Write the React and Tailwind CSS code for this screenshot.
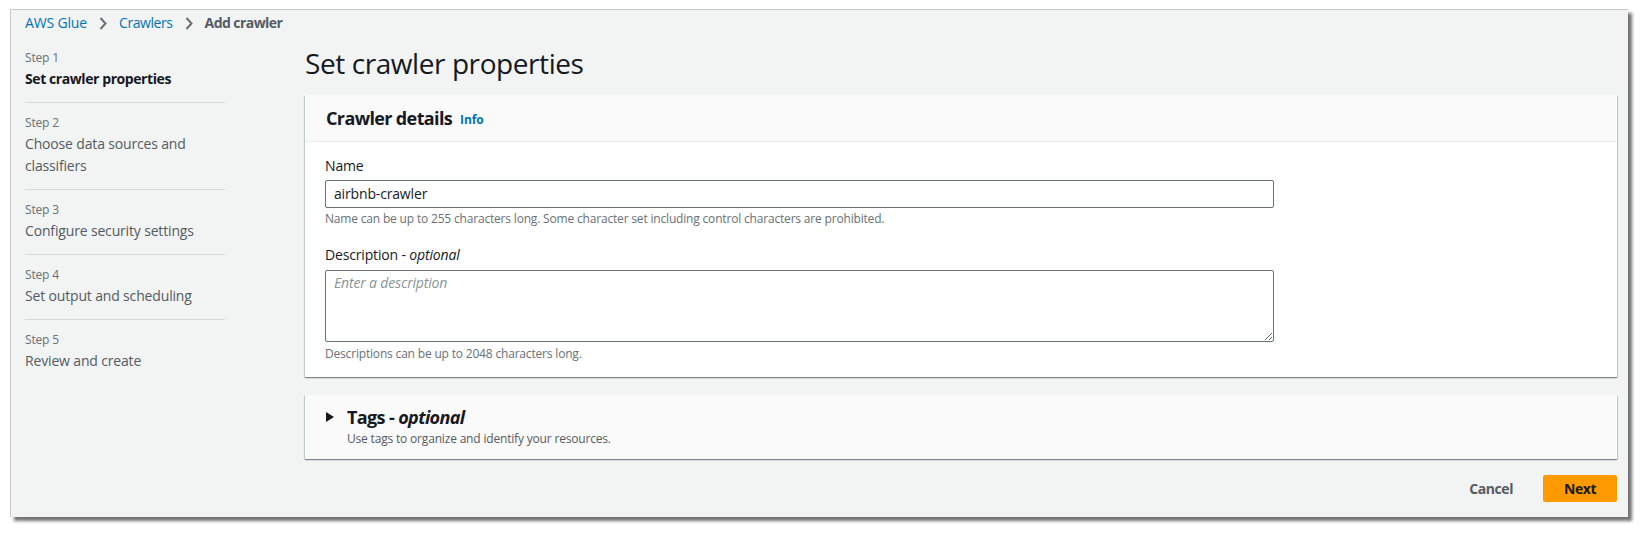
import React from 'react';

const steps = [
  { label: 'Step 1', title: 'Set crawler properties', active: true },
  { label: 'Step 2', title: 'Choose data sources and classifiers' },
  { label: 'Step 3', title: 'Configure security settings' },
  { label: 'Step 4', title: 'Set output and scheduling' },
  { label: 'Step 5', title: 'Review and create' },
];

const Chevron = () => (
  <svg width="8" height="13" viewBox="0 0 8 13" className="mx-[12px]">
    <polyline points="1.5,1 6.5,6.5 1.5,12" fill="none" stroke="#687078" strokeWidth="2" />
  </svg>
);

const panelShadow =
  'shadow-[0_1px_1px_0_rgba(0,28,36,0.3),1px_1px_1px_0_rgba(0,28,36,0.15),-1px_1px_1px_0_rgba(0,28,36,0.15)]';

export default function App() {
  return (
    <div className="w-[1646px] h-[535px] bg-white overflow-hidden font-['Open_Sans',sans-serif] text-[#16191f] tracking-[-0.01em]">
      <div className="ml-[10px] mt-[9px] w-[1618px] h-[508px] bg-[#f2f3f3] border-t border-l border-[#c6caca] shadow-[4px_4px_3px_rgba(0,0,0,0.55)] pl-[14px] pr-[10px] pt-[3px]">
        {/* breadcrumb */}
        <div className="flex items-center h-5 text-sm leading-5">
          <span className="text-[#0073bb]">AWS Glue</span>
          <Chevron />
          <span className="text-[#0073bb] tracking-[-0.03em]">Crawlers</span>
          <Chevron />
          <span className="font-bold text-[#545b64] tracking-[-0.04em]">Add crawler</span>
        </div>

        <div className="flex mt-[12px]">
          {/* steps */}
          <div className="w-[200px] pt-[5px] shrink-0">
            {steps.map((s, i) => (
              <div
                key={s.label}
                className={`${i === 0 ? '' : 'pt-3'} pb-3 ${i < steps.length - 1 ? 'border-b border-[#d5dbdb]' : ''}`}
              >
                <div className="text-xs leading-4 text-[#687078]">{s.label}</div>
                <div
                  className={`mt-0.5 text-sm leading-[22px] ${s.active ? 'font-bold text-[#16191f] tracking-[-0.03em]' : 'text-[#545b64]'}`}
                >
                  {s.title}
                </div>
              </div>
            ))}
          </div>

          {/* main */}
          <div className="ml-[80px] w-[1312px]">
            <h1 className="text-[28px] leading-9 font-normal tracking-[-0.015em]">Set crawler properties</h1>

            <div className={`mt-[14px] bg-white ${panelShadow}`}>
              <div className="h-[47px] flex items-center px-[21px] bg-[#fafafa] border-b border-[#eaeded]">
                <span className="text-lg font-bold leading-[22px] tracking-[-0.035em]">Crawler details</span>
                <span className="ml-[8px] text-xs font-bold text-[#0073bb] mt-[3px]">Info</span>
              </div>
              <div className="px-[20px] pt-[13px] pb-[15px]">
                <div className="text-sm leading-[22px]">Name</div>
                <div className="mt-[3px] w-[949px] h-[28px] border border-[#687078] rounded-[2px] px-2 flex items-center text-sm">
                  airbnb-crawler
                </div>
                <div className="mt-[3px] text-xs leading-4 text-[#687078] tracking-[-0.015em]">
                  Name can be up to 255 characters long. Some character set including control characters are prohibited.
                </div>
                <div className="mt-[17px] text-sm leading-[22px]">
                  Description - <i>optional</i>
                </div>
                <textarea
                  readOnly
                  placeholder="Enter a description"
                  className="block mt-[4px] w-[949px] h-[72px] border border-[#687078] rounded-[2px] px-2 pt-px text-sm leading-[22px] outline-none placeholder:italic placeholder:text-[#879596]"
                />
                <div className="mt-[4px] text-xs leading-4 text-[#687078] tracking-[-0.015em]">
                  Descriptions can be up to 2048 characters long.
                </div>
              </div>
            </div>

            <div className={`mt-[18px] bg-[#fafafa] ${panelShadow} px-[21px] pt-[11px] pb-[12px] flex`}>
              <svg width="8" height="10" viewBox="0 0 8 10" className="mt-[6px] shrink-0">
                <polygon points="0,0 8,5 0,10" fill="#16191f" />
              </svg>
              <div className="ml-[13px]">
                <div className="text-lg font-bold leading-[22px] tracking-[-0.035em]">
                  Tags - <i>optional</i>
                </div>
                <div className="mt-[3px] text-xs leading-4 text-[#545b64] tracking-[-0.015em]">
                  Use tags to organize and identify your resources.
                </div>
              </div>
            </div>

            <div className="mt-4 flex justify-end items-center">
              <button className="text-sm font-bold text-[#545b64] tracking-[-0.03em] mr-[30px]">Cancel</button>
              <button className="w-[74px] h-[27px] bg-[#ff9900] rounded-[2px] text-sm font-bold text-[#16191f] tracking-[-0.03em]">
                Next
              </button>
            </div>
          </div>
        </div>
      </div>
    </div>
  );
}
